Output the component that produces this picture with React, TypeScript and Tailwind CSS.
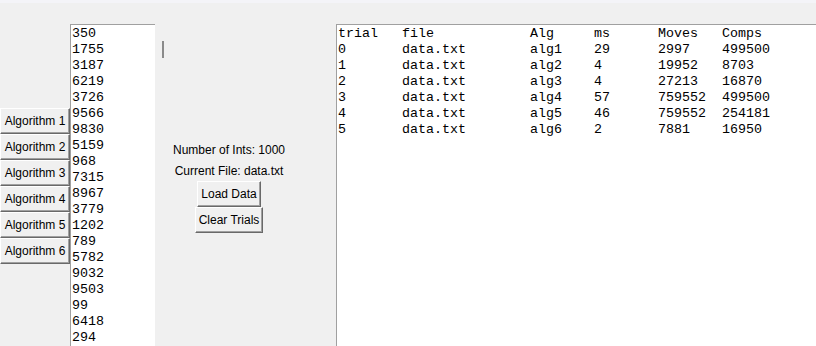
import React from "react";

const nums = [
  "350", "1755", "3187", "6219", "3726", "9566", "9830", "5159", "968", "7315",
  "8967", "3779", "1202", "789", "5782", "9032", "9503", "99", "6418", "294",
];

const rows = [
  ["trial", "file", "Alg", "ms", "Moves", "Comps"],
  ["0", "data.txt", "alg1", "29", "2997", "499500"],
  ["1", "data.txt", "alg2", "4", "19952", "8703"],
  ["2", "data.txt", "alg3", "4", "27213", "16870"],
  ["3", "data.txt", "alg4", "57", "759552", "499500"],
  ["4", "data.txt", "alg5", "46", "759552", "254181"],
  ["5", "data.txt", "alg6", "2", "7881", "16950"],
];

const mono = { fontFamily: '"Liberation Mono", "Courier New", monospace' };
const sans = { fontFamily: '"Liberation Sans", Arial, sans-serif' };

function TkButton({ label, className }: { label: string; className: string }) {
  return (
    <div
      className={`flex items-center justify-center bg-[#f0f0f0] border border-t-white border-l-white border-r-[#696969] border-b-[#696969] shadow-[inset_-1px_-1px_0_#a0a0a0] text-[12px] text-black ${className}`}
      style={sans}
    >
      {label}
    </div>
  );
}

export default function App() {
  return (
    <div className="w-[816px] h-[346px] overflow-hidden bg-[#f0f0f0] flex flex-col">
      <div className="h-[3px] bg-[#f4f4f8]" />
      <div className="flex flex-1 min-h-0">
        {/* Algorithm buttons */}
        <div className="w-[70px] flex flex-col pt-[105px]">
          {[1, 2, 3, 4, 5, 6].map((n) => (
            <TkButton key={n} label={`Algorithm ${n}`} className="w-[70px] h-[26px]" />
          ))}
        </div>

        {/* Number list */}
        <div
          className="w-[85px] mt-[21px] border-l border-t border-[#a0a0a0] bg-white pl-px pt-px text-[13.33px] leading-[16px] text-black"
          style={mono}
        >
          {nums.map((n, i) => (
            <div key={i} className="h-[16px] whitespace-pre">
              {n}
            </div>
          ))}
        </div>

        {/* Middle controls */}
        <div className="w-[181px] flex flex-col">
          <div className="ml-[7px] mt-[38px] w-[2px] h-[17px] bg-[#8a8a8a]" />
          <div className="ml-[14px] w-[120px] mt-[82px] flex flex-col items-center text-[12px] text-black" style={sans}>
            <div className="h-[20px] flex items-center whitespace-nowrap">Number of Ints: 1000</div>
            <div className="h-[21px] flex items-center whitespace-nowrap">Current File: data.txt</div>
            <TkButton label="Load Data" className="w-[64px] h-[26px]" />
            <TkButton label="Clear Trials" className="w-[68px] h-[26px]" />
          </div>
        </div>

        {/* Trials table */}
        <div
          className="flex-1 mt-[21px] border-l border-t border-[#a0a0a0] bg-white pl-px pt-px text-[13.33px] leading-[16px] text-black"
          style={mono}
        >
          {rows.map((r, i) => (
            <div key={i} className="flex h-[16px] whitespace-pre">
              <span className="w-[64px] shrink-0">{r[0]}</span>
              <span className="w-[128px] shrink-0">{r[1]}</span>
              <span className="w-[64px] shrink-0">{r[2]}</span>
              <span className="w-[64px] shrink-0">{r[3]}</span>
              <span className="w-[64px] shrink-0">{r[4]}</span>
              <span className="shrink-0">{r[5]}</span>
            </div>
          ))}
        </div>
      </div>
    </div>
  );
}
